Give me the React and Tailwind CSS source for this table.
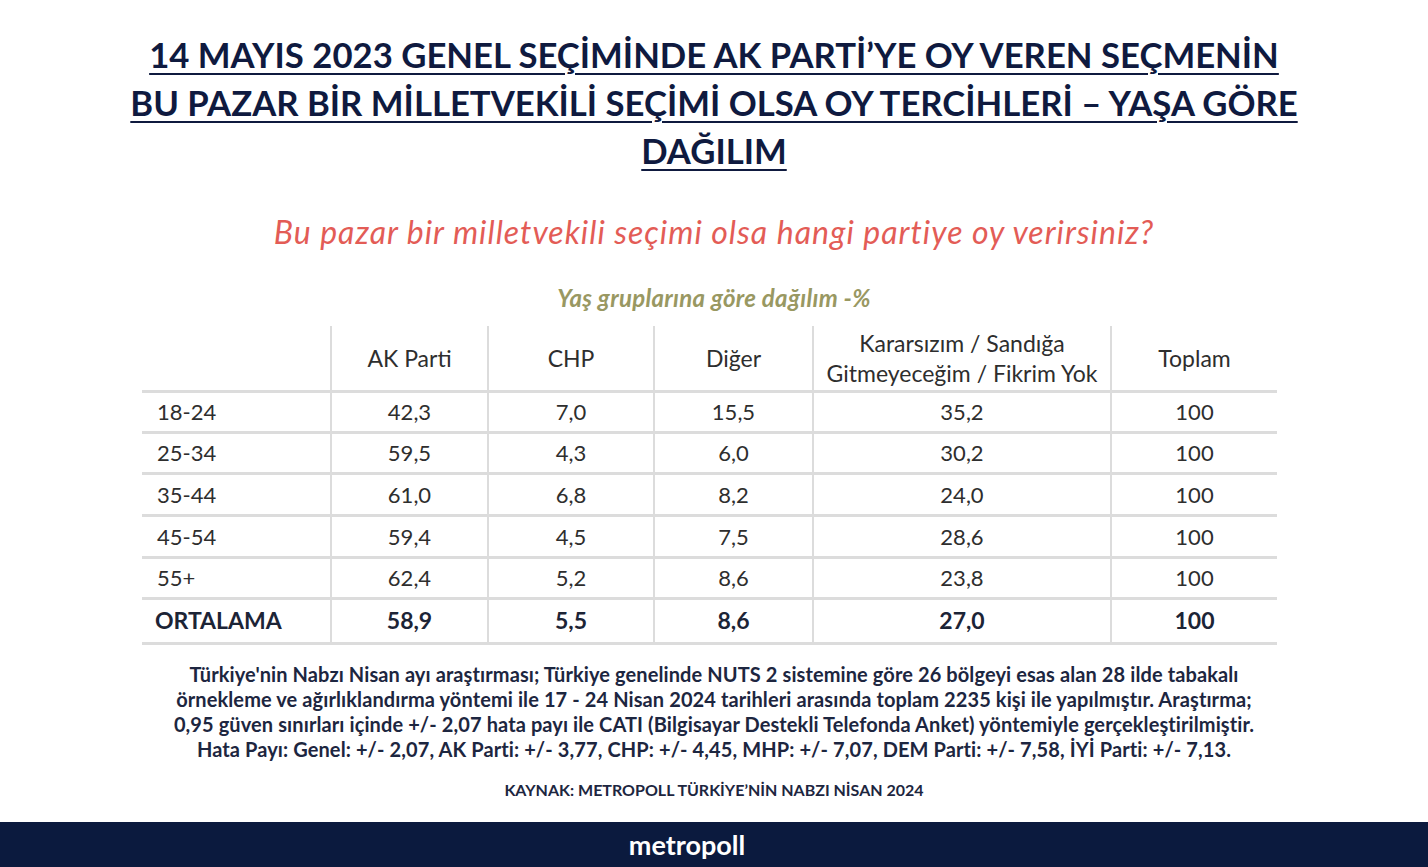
import React from 'react'

const rows = [
  ['18-24', '42,3', '7,0', '15,5', '35,2', '100'],
  ['25-34', '59,5', '4,3', '6,0', '30,2', '100'],
  ['35-44', '61,0', '6,8', '8,2', '24,0', '100'],
  ['45-54', '59,4', '4,5', '7,5', '28,6', '100'],
  ['55+', '62,4', '5,2', '8,6', '23,8', '100'],
]
const rowHeights = ['h-[41px]', 'h-[41px]', 'h-[42px]', 'h-[42px]', 'h-[41px]']

const font = { fontFamily: 'Lato, "Noto Sans", sans-serif' }

export default function App() {
  return (
    <div className="h-screen w-full bg-white flex flex-col overflow-hidden" style={font}>
      {/* title */}
      <h1 className="pt-[31px] text-center font-bold text-[34.7px] leading-[48px] text-[#0f1a3f] underline decoration-2 underline-offset-[5px]">
        14 MAYIS 2023 GENEL SEÇİMİNDE AK PARTİ’YE OY VEREN SEÇMENİN
        <br />
        BU PAZAR BİR MİLLETVEKİLİ SEÇİMİ OLSA OY TERCİHLERİ – YAŞA GÖRE
        <br />
        DAĞILIM
      </h1>

      <p className="mt-[38px] text-center italic text-[32px] leading-[38px] tracking-[1px] text-[#e35c56]">
        Bu pazar bir milletvekili seçimi olsa hangi partiye oy verirsiniz?
      </p>

      <p className="mt-[34px] text-center italic font-bold text-[24px] leading-[26px] tracking-[0.3px] text-[#999862]">
        Yaş gruplarına göre dağılım -%
      </p>

      <div className="mt-[15px] pl-[142px]">
        <table className="border-collapse text-[22px] text-[#2e2e2e]">
          <colgroup>
            <col className="w-[189px]" />
            <col className="w-[157px]" />
            <col className="w-[166px]" />
            <col className="w-[159px]" />
            <col className="w-[298px]" />
            <col className="w-[166px]" />
          </colgroup>
          <thead>
            <tr className="h-[65px] border-b-[3px] border-[#dcdcdc] text-[23px]">
              <th className="border-r-2 border-[#dcdcdc]"></th>
              <th className="font-normal border-r-2 border-[#dcdcdc]">AK Parti</th>
              <th className="font-normal border-r-2 border-[#dcdcdc]">CHP</th>
              <th className="font-normal border-r-2 border-[#dcdcdc]">Diğer</th>
              <th className="font-normal leading-[30px] border-r-2 border-[#dcdcdc]">
                Kararsızım / Sandığa
                <br />
                Gitmeyeceğim / Fikrim Yok
              </th>
              <th className="font-normal">Toplam</th>
            </tr>
          </thead>
          <tbody>
            {rows.map((r, i) => (
              <tr key={r[0]} className={`${rowHeights[i]} border-b-[3px] border-[#dcdcdc]`}>
                <td className="pl-[15px] text-left border-r-2 border-[#dcdcdc]">{r[0]}</td>
                {r.slice(1).map((v, j) => (
                  <td
                    key={j}
                    className={`text-center ${j < 4 ? 'border-r-2 border-[#dcdcdc]' : ''}`}
                  >
                    {v}
                  </td>
                ))}
              </tr>
            ))}
            <tr className="h-[45px] border-b-[3px] border-[#dcdcdc] font-bold text-[23px] text-[#1c2436]">
              <td className="pl-[13px] text-left border-r-2 border-[#dcdcdc]">ORTALAMA</td>
              <td className="text-center border-r-2 border-[#dcdcdc]">58,9</td>
              <td className="text-center border-r-2 border-[#dcdcdc]">5,5</td>
              <td className="text-center border-r-2 border-[#dcdcdc]">8,6</td>
              <td className="text-center border-r-2 border-[#dcdcdc]">27,0</td>
              <td className="text-center">100</td>
            </tr>
          </tbody>
        </table>
      </div>

      <p className="mt-[17px] text-center font-bold text-[20px] leading-[25px] tracking-[0.1px] text-[#1d2640]">
        Türkiye'nin Nabzı Nisan ayı araştırması; Türkiye genelinde NUTS 2 sistemine göre 26 bölgeyi esas alan 28 ilde tabakalı
        <br />
        örnekleme ve ağırlıklandırma yöntemi ile 17 - 24 Nisan 2024 tarihleri arasında toplam 2235 kişi ile yapılmıştır. Araştırma;
        <br />
        0,95 güven sınırları içinde +/- 2,07 hata payı ile CATI (Bilgisayar Destekli Telefonda Anket) yöntemiyle gerçekleştirilmiştir.
        <br />
        Hata Payı: Genel: +/- 2,07, AK Parti: +/- 3,77, CHP: +/- 4,45, MHP: +/- 7,07, DEM Parti: +/- 7,58, İYİ Parti: +/- 7,13.
      </p>

      <p className="mt-[19px] text-center font-bold text-[16px] leading-[18px] text-[#1d2640]">
        KAYNAK: METROPOLL TÜRKİYE’NİN NABZI NİSAN 2024
      </p>

      <div className="mt-auto h-[45px] bg-[#0b1a3e] flex items-center justify-center pr-[54px]">
        <span className="text-white font-bold text-[27px] leading-none">metropoll</span>
      </div>
    </div>
  )
}
